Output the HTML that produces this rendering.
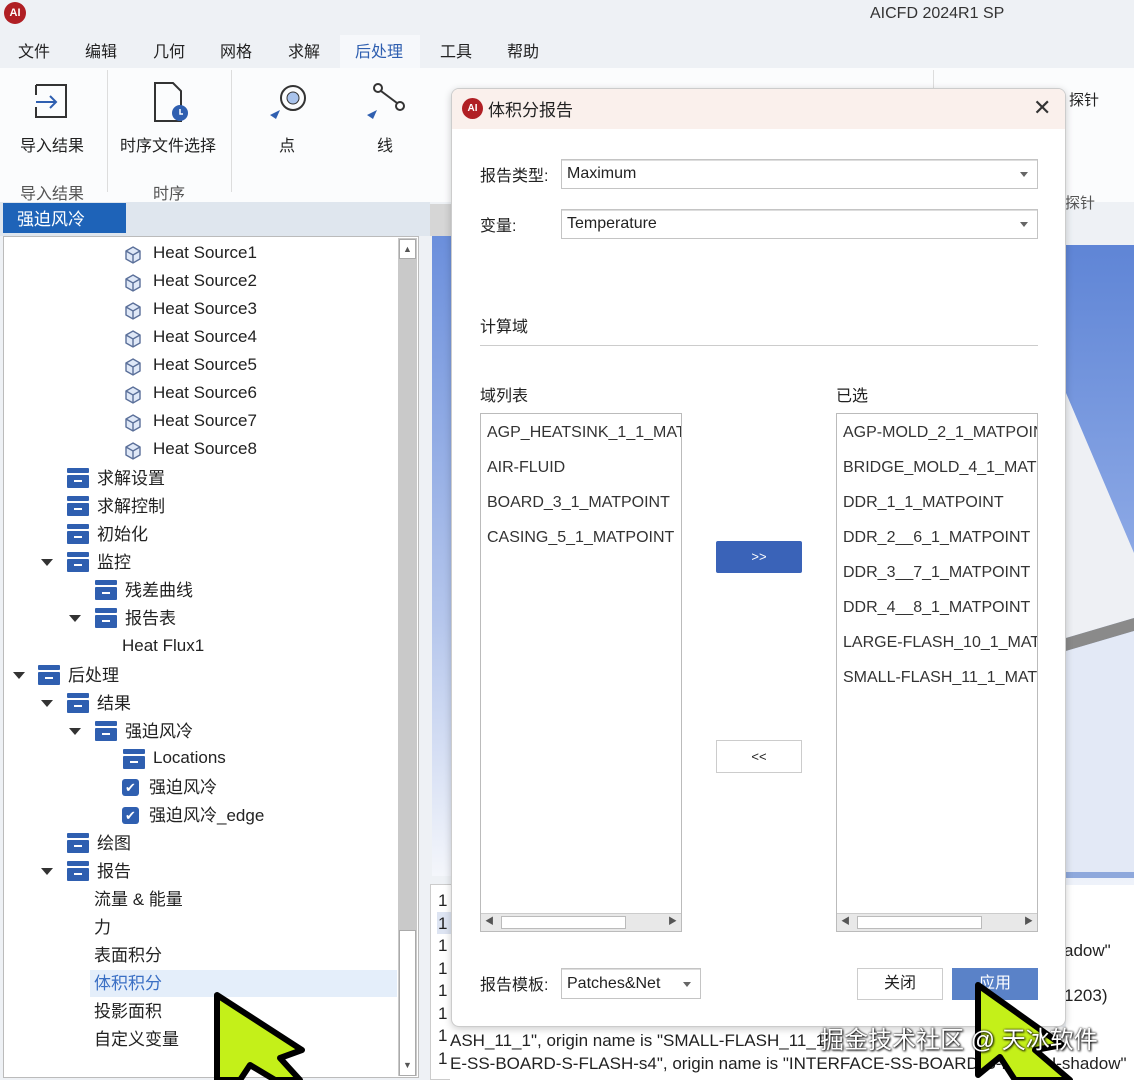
<!DOCTYPE html>
<html><head><meta charset="utf-8">
<style>
*{margin:0;padding:0;box-sizing:border-box}
body{width:1134px;height:1080px;overflow:hidden;background:#eef1f5;font-family:"Liberation Sans","Noto Sans CJK SC",sans-serif;color:#222;position:relative}
.a{position:absolute;white-space:nowrap}
.t{font-size:17px}
.ico{position:absolute;width:22px;height:20px}
.ico::before{content:"";position:absolute;left:0;top:0;width:22px;height:5px;background:#2f5fb0;border-radius:1px}
.ico::after{content:"";position:absolute;left:0;top:7px;width:22px;height:13px;background:#2f5fb0;border-radius:1px}
.ico i{position:absolute;left:7px;top:12px;width:8px;height:2px;background:#fff;z-index:2}
.arr{position:absolute;width:0;height:0;border-left:6px solid transparent;border-right:6px solid transparent;border-top:7px solid #333}
.chk{position:absolute;width:17px;height:17px;background:#2f5fb0;border-radius:3px;color:#fff;font-size:13px;line-height:17px;text-align:center}
.lb{font-size:16px}
.combo{position:absolute;border:1px solid #c4c4c4;background:#fff;font-size:16px;padding-left:5px;box-shadow:inset 0 1px 0 #ddd}
.combo::after{content:"";position:absolute;right:9px;top:50%;margin-top:-2px;border-left:4px solid transparent;border-right:4px solid transparent;border-top:5px solid #666}
.list{position:absolute;border:1px solid #bbb;background:#fff;overflow:hidden}
.list div{position:absolute;left:6px;font-size:16px;color:#333;white-space:nowrap}
.hs{position:absolute;bottom:0;left:0;right:0;height:18px;border-top:1px solid #ccc;background:#e8e8e8}
</style></head><body>
<div class="a" style="left:4px;top:2px;width:22px;height:22px;border-radius:50%;background:#b01f24;color:#fff;font-size:11px;font-weight:bold;text-align:center;line-height:22px">AI</div>
<div class="a" style="left:870px;top:5px;font-size:16px;color:#333">AICFD 2024R1 SP</div>
<div class="a" style="left:340px;top:35px;width:80px;height:33px;background:#f6f8fb"></div>
<div class="a" style="top:38px;font-size:16px;left:18px">文件</div>
<div class="a" style="top:38px;font-size:16px;left:85px">编辑</div>
<div class="a" style="top:38px;font-size:16px;left:153px">几何</div>
<div class="a" style="top:38px;font-size:16px;left:220px">网格</div>
<div class="a" style="top:38px;font-size:16px;left:288px">求解</div>
<div class="a" style="top:38px;font-size:16px;left:355px;color:#2f5fb0">后处理</div>
<div class="a" style="top:38px;font-size:16px;left:440px">工具</div>
<div class="a" style="top:38px;font-size:16px;left:507px">帮助</div>
<div class="a" style="left:0;top:68px;width:1134px;height:134px;background:#fbfcfd"></div>
<div class="a" style="left:107px;top:70px;width:1px;height:122px;background:#ddd"></div>
<div class="a" style="left:231px;top:70px;width:1px;height:122px;background:#ddd"></div>
<div class="a" style="left:933px;top:70px;width:1px;height:122px;background:#ddd"></div>
<svg class="a" style="left:30px;top:80px" width="50" height="45"><path d="M6 5h30v32H6V27M6 15V5" fill="none" stroke="#333" stroke-width="2"/><path d="M6 22h20M20 16l6 6-6 6" fill="none" stroke="#2f5fb0" stroke-width="2"/></svg>
<div class="a" style="left:20px;top:132px;font-size:16px">导入结果</div>
<svg class="a" style="left:145px;top:80px" width="50" height="45"><path d="M10 3h18l8 8v30H10z" fill="none" stroke="#333" stroke-width="2"/><circle cx="35" cy="33" r="8" fill="#2f5fb0"/><path d="M35 29v5h3" stroke="#fff" stroke-width="1.5" fill="none"/></svg>
<div class="a" style="left:120px;top:132px;font-size:16px">时序文件选择</div>
<svg class="a" style="left:265px;top:80px" width="50" height="45"><circle cx="28" cy="18" r="12" fill="none" stroke="#333" stroke-width="2"/><circle cx="28" cy="18" r="6" fill="#a9c3ec" stroke="#333" stroke-width="1"/><path d="M5 35l10-5-4 9z" fill="#2f5fb0"/></svg>
<div class="a" style="left:279px;top:132px;font-size:16px">点</div>
<svg class="a" style="left:360px;top:80px" width="50" height="45"><circle cx="18" cy="8" r="4" fill="#fff" stroke="#333" stroke-width="2"/><circle cx="40" cy="26" r="4" fill="#fff" stroke="#333" stroke-width="2"/><path d="M21 11l16 12" stroke="#333" stroke-width="2"/><path d="M7 35l10-5-4 9z" fill="#2f5fb0"/></svg>
<div class="a" style="left:377px;top:132px;font-size:16px">线</div>
<div class="a" style="left:20px;top:180px;font-size:16px;color:#555">导入结果</div>
<div class="a" style="left:153px;top:180px;font-size:16px;color:#555">时序</div>
<div class="a" style="left:1069px;top:89px;font-size:15px">探针</div>
<div class="a" style="left:1065px;top:192px;font-size:15px;color:#555">探针</div>
<div class="a" style="left:0;top:202px;width:430px;height:34px;background:#dfe6ee"></div>
<div class="a" style="left:3px;top:203px;width:123px;height:30px;background:#1e63b8;color:#fff;font-size:17px;padding:2px 0 0 14px">强迫风冷</div>
<div class="a" style="left:3px;top:236px;width:416px;height:842px;background:#fff;border:1px solid #bbb"></div>
<div class="a" style="left:398px;top:238px;width:19px;height:838px;background:#c9c9c9"></div>
<div class="a" style="left:399px;top:239px;width:17px;height:20px;background:#fff;border:1px solid #aaa;font-size:9px;text-align:center;line-height:18px;color:#555">▲</div>
<div class="a" style="left:399px;top:930px;width:17px;height:146px;background:#fff;border:1px solid #aaa"></div>
<div class="a" style="left:399px;top:1056px;width:17px;height:19px;font-size:9px;text-align:center;line-height:18px;color:#555">▼</div>
<div id="tree"></div>
<div class="a" style="left:430px;top:204px;width:30px;height:32px;background:#d6d6d6"></div>
<div class="a" style="left:432px;top:236px;width:30px;height:640px;background:linear-gradient(#6b8fdc,#b5c6ec 60%,#f4f6fb)"></div>
<div class="a" style="left:430px;top:884px;width:30px;height:196px;background:#fff;border:1px solid #ccc"></div>
<div class="a" style="left:437px;top:912px;width:14px;height:22px;background:#dde4f2"></div>
<div class="a" style="left:438px;top:890px;font-size:17px;line-height:22.5px">1<br>1<br>1<br>1<br>1<br>1<br>1<br>1</div>
<div class="a" style="left:1066px;top:245px;width:68px;height:640px;background:linear-gradient(#5f85d6,#8eaae6 50%,#dfe6f6 85%,#eef2fa)"></div>
<svg class="a" style="left:1066px;top:245px" width="68" height="640"><polygon points="0,148 68,308 68,373 0,393" fill="#eef0f4"/><polygon points="0,393 68,373 68,386 0,406" fill="#8a8a8a"/><polygon points="0,406 68,386 68,627 0,627" fill="#e3e9f6"/><rect x="0" y="627" width="68" height="6" fill="#8ea8dc"/></svg>
<div class="a" style="left:1066px;top:885px;width:68px;height:195px;background:#fff"></div>
<div class="a" style="left:1064px;top:941px;font-size:17px">adow"</div>
<div class="a" style="left:1064px;top:986px;font-size:17px">1203)</div>
<div class="a" style="left:450px;top:1027px;width:684px;height:53px;background:#fff"></div>
<div class="a" style="left:450px;top:1031px;font-size:17px">ASH_11_1", origin name is "SMALL-FLASH_11_1"</div>
<div class="a" style="left:450px;top:1054px;font-size:17px">E-SS-BOARD-S-FLASH-s4", origin name is "INTERFACE-SS-BOARD-S-FLASH-shadow"</div>
<div class="a" style="left:451px;top:88px;width:615px;height:939px;background:#fff;border:1px solid #ccc;border-radius:8px;box-shadow:0 2px 8px rgba(0,0,0,.2);overflow:hidden">
 <div style="position:absolute;left:0;top:0;width:615px;height:40px;background:#faf0ec"></div>
 <div class="a" style="left:10px;top:9px;width:21px;height:21px;border-radius:50%;background:#b01f24;color:#fff;font-size:10px;font-weight:bold;text-align:center;line-height:21px">AI</div>
 <div class="a" style="left:36px;top:7px;font-size:17px">体积分报告</div>
 <div class="a" style="left:581px;top:6px;font-size:22px;color:#333">✕</div>
 <div class="a lb" style="left:28px;top:73px">报告类型:</div>
 <div class="combo" style="left:109px;top:70px;width:477px;height:30px;line-height:28px">Maximum</div>
 <div class="a lb" style="left:28px;top:123px">变量:</div>
 <div class="combo" style="left:109px;top:120px;width:477px;height:30px;line-height:28px">Temperature</div>
 <div class="a lb" style="left:28px;top:224px">计算域</div>
 <div class="a" style="left:28px;top:256px;width:558px;height:1px;background:#ccc"></div>
 <div class="a lb" style="left:28px;top:293px">域列表</div>
 <div class="a lb" style="left:384px;top:293px">已选</div>
 <div class="list" style="left:28px;top:324px;width:202px;height:519px">
  <div style="top:10px">AGP_HEATSINK_1_1_MATPOINT</div><div style="top:45px">AIR-FLUID</div><div style="top:80px">BOARD_3_1_MATPOINT</div><div style="top:115px">CASING_5_1_MATPOINT</div>
  <div class="hs" style="left:0"><span style="position:absolute;left:20px;top:2px;width:125px;height:13px;background:#fff;border:1px solid #bbb"></span><span style="position:absolute;left:4px;top:0;font-size:9px;color:#555">◀</span><span style="position:absolute;right:4px;top:0;font-size:9px;color:#555">▶</span></div>
 </div>
 <div class="list" style="left:384px;top:324px;width:202px;height:519px">
  <div style="top:10px">AGP-MOLD_2_1_MATPOINT</div><div style="top:45px">BRIDGE_MOLD_4_1_MATPOINT</div><div style="top:80px">DDR_1_1_MATPOINT</div><div style="top:115px">DDR_2__6_1_MATPOINT</div><div style="top:150px">DDR_3__7_1_MATPOINT</div><div style="top:185px">DDR_4__8_1_MATPOINT</div><div style="top:220px">LARGE-FLASH_10_1_MATPOINT</div><div style="top:255px">SMALL-FLASH_11_1_MATPOINT</div>
  <div class="hs" style="left:0"><span style="position:absolute;left:20px;top:2px;width:125px;height:13px;background:#fff;border:1px solid #bbb"></span><span style="position:absolute;left:4px;top:0;font-size:9px;color:#555">◀</span><span style="position:absolute;right:4px;top:0;font-size:9px;color:#555">▶</span></div>
 </div>
 <div class="a" style="left:264px;top:452px;width:86px;height:32px;background:#3a63b8;color:#fff;font-size:13px;text-align:center;line-height:32px;border-radius:2px">&gt;&gt;</div>
 <div class="a" style="left:264px;top:651px;width:86px;height:33px;background:#fff;border:1px solid #ccc;font-size:13px;text-align:center;line-height:31px">&lt;&lt;</div>
 <div class="a lb" style="left:28px;top:882px">报告模板:</div>
 <div class="combo" style="left:109px;top:879px;width:140px;height:31px;line-height:29px">Patches&amp;Net</div>
 <div class="a" style="left:405px;top:879px;width:86px;height:32px;border:1px solid #ccc;background:#fff;font-size:16px;text-align:center;line-height:30px">关闭</div>
 <div class="a" style="left:500px;top:879px;width:86px;height:32px;background:#5a82c8;color:#fff;font-size:16px;text-align:center;line-height:32px">应用</div>
</div>
<svg class="a" style="left:0;top:0" width="1134" height="1080"><polygon points="217,995 217,1080 240,1080 250,1065 275,1080 300,1080 280,1058 302,1050" fill="#c4f019" stroke="#000" stroke-width="6" stroke-linejoin="round"/><polygon points="978,985 978,1075 1000,1057 1015,1080 1070,1080 1035,1050 1062,1045" fill="#c4f019" stroke="#000" stroke-width="6" stroke-linejoin="round"/></svg>
<div class="a" style="left:820px;top:1020px;font-size:24px;color:#fff;text-shadow:0 0 2px #000,1px 1px 2px #000">掘金技术社区 @ 天冰软件</div>
<script>
var rows=[
[1,'Heat Source1',254],[1,'Heat Source2',282],[1,'Heat Source3',310],[1,'Heat Source4',338],[1,'Heat Source5',366],[1,'Heat Source6',394],[1,'Heat Source7',422],[1,'Heat Source8',450],
[2,'求解设置',478,67,97],[2,'求解控制',506,67,97],[2,'初始化',534,67,97],[2,'监控',562,67,97,47],
[2,'残差曲线',590,95,125],[2,'报告表',618,95,125,75],[0,'Heat Flux1',647,0,122],
[2,'后处理',675,38,68,19],[2,'结果',703,67,97,47],[2,'强迫风冷',731,95,125,75],[2,'Locations',759,123,153],
[3,'强迫风冷',787,122,149],[3,'强迫风冷_edge',815,122,149],[2,'绘图',843,67,97],[2,'报告',871,67,97,47],
[0,'流量 & 能量',899,0,94],[0,'力',927,0,94],[0,'表面积分',955,0,94],[4,'体积积分',983,0,94],[0,'投影面积',1011,0,94],[0,'自定义变量',1039,0,94]];
var h='';
rows.forEach(function(r){var y=r[2];var off=/^[A-Za-z]/.test(r[1])?11:14;
if(r[0]==1){h+='<svg class="a" style="left:123px;top:'+(y-9)+'px" width="20" height="20"><path d="M10 2l7 4v8l-7 4-7-4V6z" fill="#dfe8f7" stroke="#5a6f99" stroke-width="1.4"/><path d="M3 6l7 4 7-4M10 10v8" fill="none" stroke="#5a6f99" stroke-width="1.4"/></svg><div class="a t" style="left:153px;top:'+(y-11)+'px">'+r[1]+'</div>';return;}
if(r[0]==4){h+='<div class="a" style="left:90px;top:'+(y-13)+'px;width:307px;height:27px;background:#e4eefa"></div><div class="a t" style="left:94px;top:'+(y-off)+'px;color:#3a6fc4">'+r[1]+'</div>';return;}
if(r[0]==2)h+='<div class="ico" style="left:'+r[3]+'px;top:'+(y-10)+'px"><i></i></div>';
if(r[0]==3)h+='<div class="chk" style="left:'+r[3]+'px;top:'+(y-8)+'px">✔</div>';
if(r[5])h+='<div class="arr" style="left:'+(r[5]-6)+'px;top:'+(y-3)+'px"></div>';
h+='<div class="a t" style="left:'+r[4]+'px;top:'+(y-off)+'px">'+r[1]+'</div>';});
document.getElementById('tree').innerHTML=h;
</script>
</body></html>
